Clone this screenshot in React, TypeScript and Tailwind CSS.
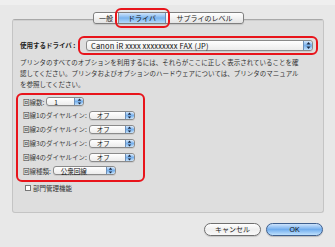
import React from "react";

const JP = { fontFamily: '"Noto Sans CJK JP", "Liberation Sans", sans-serif' };

function Stepper({ h = 9 }: { h?: number }) {
  return (
    <div className="flex items-center justify-center w-[9px] h-full rounded-r-[3px] border-l border-[#6c8fb8] bg-gradient-to-b from-[#d4e7fb] via-[#78b1ec] to-[#c2e0fb]">
      <svg width="5" height={h - 2} viewBox="0 0 5 8">
        <path d="M2.5 0.5 L4.5 3 L0.5 3 Z" fill="#1b2a44" />
        <path d="M2.5 7.5 L4.5 5 L0.5 5 Z" fill="#1b2a44" />
      </svg>
    </div>
  );
}

function Popup({ text, w, h = 10, big = false }: { text: string; w: number; h?: number; big?: boolean }) {
  return (
    <div
      className="flex items-stretch border border-[#8a8a8a] rounded-[3px] bg-gradient-to-b from-[#ffffff] to-[#ececec] shadow-[0_1px_0_rgba(0,0,0,0.08)]"
      style={{ width: w, height: h }}
    >
      <div
        className={
          big
            ? "flex-1 flex items-center pl-[4px] text-[7.5px] tracking-[0.15px] text-[#111] leading-none whitespace-nowrap"
            : "flex-1 flex items-center pl-[7px] text-[6.5px] text-[#111] leading-none whitespace-nowrap"
        }
      >
        {text}
      </div>
      <Stepper h={h} />
    </div>
  );
}

function Row({ label, text, w }: { label: string; text: string; w: number }) {
  return (
    <div className="flex items-center h-[13.8px] gap-[2px]">
      <span className="text-[6.5px] text-[#3a3a3a] leading-none whitespace-nowrap">{label}</span>
      <Popup text={text} w={w} h={9} />
    </div>
  );
}

export default function App() {
  return (
    <div className="w-[335px] h-[247px] bg-[#e8e8e8] overflow-hidden flex flex-col" style={JP}>
      <div className="h-[5px] bg-[#efefef]" />
      <div className="px-[12px] pt-[3px] flex flex-col">
        {/* tabs */}
        <div className="relative z-10 flex justify-center h-[20px] items-center pl-[2px]">
          <div className="flex h-[12px] border border-[#7f7f7f] rounded-[3px] text-[7px] leading-none text-[#222] shadow-[0_1px_1px_rgba(0,0,0,0.12)]">
            <div className="flex items-center justify-center w-[25px] bg-gradient-to-b from-[#ffffff] to-[#e4e4e4] rounded-l-[3px] border-r border-[#8a8a8a]">一般</div>
            <div className="relative flex items-center justify-center w-[47px] bg-gradient-to-b from-[#d0e5fb] via-[#79b3ee] to-[#b4dafa] border-r border-[#6d8db5] text-[#111]">
              ドライバ
              <div className="absolute -left-[4px] -right-[5px] -top-[5px] -bottom-[5px] border-2 border-[#e8141b] rounded-[6px]" />
            </div>
            <div className="flex items-center justify-center w-[77px] bg-gradient-to-b from-[#ffffff] to-[#e4e4e4] rounded-r-[3px]">サプライのレベル</div>
          </div>
        </div>
        {/* panel */}
        <div className="-mt-[9px] h-[194px] w-[312px] border border-[#c4c4c4] border-t-[#a9a9a9] rounded-[3px] bg-[#dedede] flex flex-col">
          <div className="h-px bg-[#cfcfcf]" />
          {/* driver row */}
          <div className="flex items-center mt-[15px] pl-[7px]">
            <span className="text-[6.5px] font-bold text-[#222] leading-none whitespace-nowrap w-[58px]">使用するドライバ :</span>
            <div className="border-2 border-[#e8141b] rounded-[6px] pl-[6px] pr-[3px] py-[2px]">
              <Popup text="Canon iR xxxx xxxxxxxxx FAX (JP)" w={227} h={11} big />
            </div>
          </div>
          {/* paragraph */}
          <div className="pl-[7px] mt-[2px] text-[6.5px] leading-[11px] text-[#333] whitespace-nowrap">
            <div>プリンタのすべてのオプションを利用するには、それらがここに正しく表示されていることを確</div>
            <div>認してください。プリンタおよびオプションのハードウェアについては、プリンタのマニュアル</div>
            <div>を参照してください。</div>
          </div>
          {/* line settings */}
          <div className="ml-[3px] mt-[3px] w-[129px] h-[89px] border-2 border-[#e8141b] rounded-[6px] pl-[5px] flex flex-col">
            <Row label="回線数:" text="1" w={38} />
            <Row label="回線1のダイヤルイン:" text="オフ" w={46} />
            <Row label="回線2のダイヤルイン:" text="オフ" w={46} />
            <Row label="回線3のダイヤルイン:" text="オフ" w={46} />
            <Row label="回線4のダイヤルイン:" text="オフ" w={46} />
            <Row label="回線種類:" text="公衆回線" w={63} />
          </div>
          <div className="flex items-center gap-[2px] pl-[12px] mt-[3px]">
            <div className="w-[6px] h-[6px] border border-[#777] bg-white" />
            <span className="text-[6.5px] text-[#333] leading-none">部門管理機能</span>
          </div>
        </div>
        {/* buttons */}
        <div className="flex justify-end gap-[5px] mt-[10px]">
          <div className="w-[57px] h-[13px] rounded-full border border-[#6f6f6f] bg-gradient-to-b from-[#ffffff] via-[#efefef] to-[#f9f9f9] flex items-center justify-center text-[7px] text-[#222] leading-none shadow-[0_1px_1px_rgba(0,0,0,0.15)]">
            キャンセル
          </div>
          <div className="w-[57px] h-[13px] rounded-full border border-[#3e5f8e] bg-gradient-to-b from-[#cde3fb] via-[#72aeee] to-[#bfe1fc] flex items-center justify-center text-[7px] text-[#111] leading-none shadow-[0_1px_1px_rgba(0,0,0,0.2)]" style={{ fontFamily: '"Liberation Sans", sans-serif' }}>
            OK
          </div>
        </div>
      </div>
    </div>
  );
}
